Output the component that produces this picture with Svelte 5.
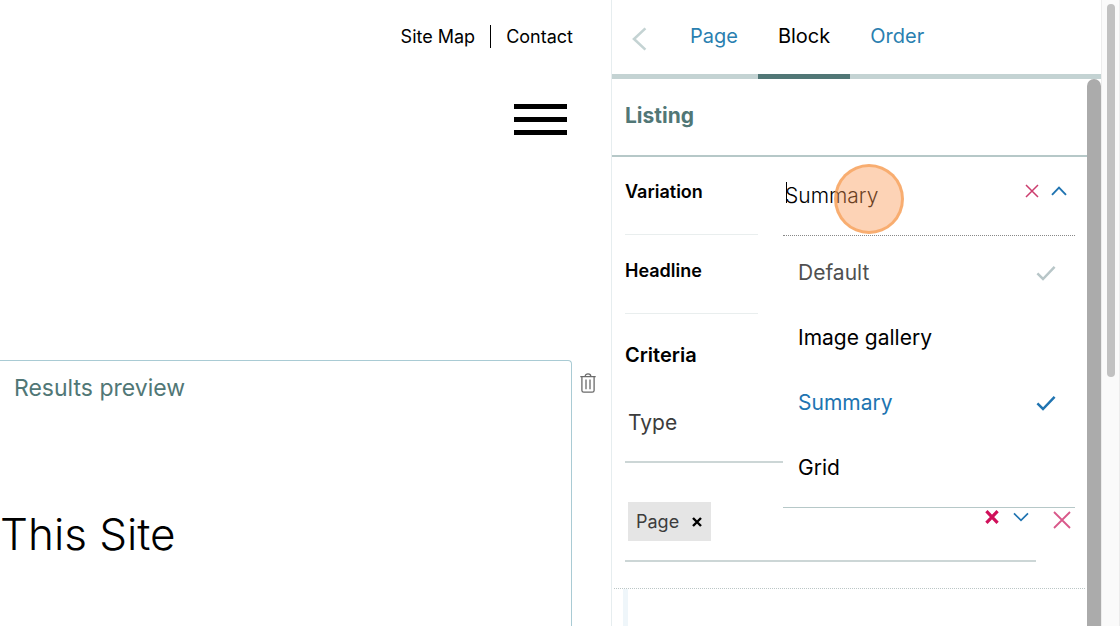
<script>
  const tabs = ['Page', 'Block', 'Order'];
  const variations = ['Default', 'Image gallery', 'Summary', 'Grid'];
  const fallback = 'Default';

  let activeTab = $state('Block');
  let variation = $state('Summary');
  let menuOpen = $state(true);
  let criteria = $state(['Page']);

  function choose(name) {
    variation = name;
    menuOpen = false;
  }
</script>

<div class="editor">
  <main class="page">
    <header class="page-header">
      <nav class="tools">
        <a href="#sitemap">Site Map</a>
        <a href="#contact">Contact</a>
      </nav>
      <button class="burger" aria-label="Open menu">
        <span></span>
        <span></span>
        <span></span>
      </button>
    </header>

    <div class="block-row">
      <section class="listing">
        <p class="preview-label">Results preview</p>
        <h2>This Site</h2>
      </section>
      <button class="delete" aria-label="Remove block">
        <svg width="16" height="20" viewBox="0 0 16 20" fill="none" stroke="#6b6b6b" stroke-width="1.3">
          <path d="M0.3 3.6H15.7M5.2 3.4C5.2 0 10.8 0 10.8 3.4M1.9 4V17.4Q1.9 19.2 3.7 19.2H12.3Q14.1 19.2 14.1 17.4V4M6 6.6V16.2M10 6.6V16.2" />
        </svg>
      </button>
    </div>
  </main>

  <aside class="sidebar">
    <div class="tabs">
      <button class="back" aria-label="Back">
        <svg width="15" height="24" viewBox="0 0 15 24" fill="none" stroke="#c4d3d3" stroke-width="2.6">
          <path d="M13.4 1.4 2 12 13.4 22.6" />
        </svg>
      </button>
      {#each tabs as tab}
        <button class="tab" class:active={tab === activeTab} onclick={() => (activeTab = tab)}>{tab}</button>
      {/each}
    </div>

    <div class="panel">
      <form class="settings">
        <h1>Listing</h1>

        <div class="field">
          <label for="variation">Variation</label>
          <div class="control combo">
            <input id="variation" type="text" role="combobox" aria-expanded={menuOpen} aria-controls="variation-menu" value={variation} />
            <span class="caret"></span>
            <button type="button" class="icon" aria-label="Clear variation" onclick={() => (variation = '')}>
              <svg width="14" height="14" viewBox="0 0 14 14" fill="none" stroke="#cc3d6e" stroke-width="1.5">
                <path d="M1 1 13 13M13 1 1 13" />
              </svg>
            </button>
            <button type="button" class="icon" aria-label="Toggle menu" onclick={() => (menuOpen = !menuOpen)}>
              <svg width="16" height="10" viewBox="0 0 16 10" fill="none" stroke="#2074b1" stroke-width="1.9">
                <path d="M1 8.8 8 1.6 15 8.8" />
              </svg>
            </button>
            {#if menuOpen}
              <div class="menu" id="variation-menu" role="listbox">
                {#each variations as name}
                  <button
                    type="button"
                    role="option"
                    class="option"
                    class:selected={name === variation}
                    class:fallback={name === fallback}
                    aria-selected={name === variation}
                    onclick={() => choose(name)}
                  >
                    {name}
                    {#if name === variation || name === fallback}
                      <svg width="20" height="16" viewBox="0 0 20 16" fill="none" stroke="currentColor" stroke-width="2.5">
                        <path d="M1.4 8.4 7 14 18.6 1.8" />
                      </svg>
                    {/if}
                  </button>
                {/each}
              </div>
            {/if}
            <span class="pointer"></span>
          </div>
        </div>

        <div class="field">
          <label for="headline">Headline</label>
          <div class="control">
            <input id="headline" type="text" />
          </div>
        </div>

        <fieldset class="criteria">
          <legend>Criteria</legend>
          <select aria-label="Criterion">
            <option>Type</option>
          </select>
          <div class="criterion">
            <div class="values">
              {#each criteria as value}
                <span class="chip">
                  {value}
                  <button type="button" aria-label="Remove {value}" onclick={() => (criteria = criteria.filter((v) => v !== value))}>
                    <svg width="10" height="10" viewBox="0 0 10 10" fill="none" stroke="#000" stroke-width="2.4">
                      <path d="M1 1 9 9M9 1 1 9" />
                    </svg>
                  </button>
                </span>
              {/each}
              <span class="actions">
                <button type="button" class="icon" aria-label="Clear values" onclick={() => (criteria = [])}>
                  <svg width="14" height="14" viewBox="0 0 14 14" fill="none" stroke="#d0105a" stroke-width="3.2">
                    <path d="M1.4 1.2 12.6 12.8M12.6 1.2 1.4 12.8" />
                  </svg>
                </button>
                <button type="button" class="icon" aria-label="Open values">
                  <svg width="16" height="10" viewBox="0 0 16 10" fill="none" stroke="#2074b1" stroke-width="1.7">
                    <path d="M1 1.4 8 8.4 15 1.4" />
                  </svg>
                </button>
              </span>
            </div>
            <button type="button" class="remove" aria-label="Remove criterion">
              <svg width="18" height="18" viewBox="0 0 18 18" fill="none" stroke="#d9588a" stroke-width="1.8">
                <path d="M1 1 17 17M17 1 1 17" />
              </svg>
            </button>
          </div>
        </fieldset>
        <div class="next"></div>
      </form>
      <div class="panel-scroll"></div>
    </div>
  </aside>

  <div class="window-scroll"><div class="thumb"></div></div>
</div>

<style>
  :global(body) {
    background: #fff;
  }
  .editor {
    display: flex;
    height: 100vh;
    overflow: hidden;
    font-family: Inter, 'Liberation Sans', sans-serif;
    color: #000;
  }
  .editor * {
    box-sizing: border-box;
  }
  button,
  input,
  select {
    margin: 0;
    padding: 0;
    border: 0;
    border-radius: 0;
    background: none;
    color: inherit;
    font: inherit;
    outline: none;
  }
  button {
    cursor: pointer;
  }
  svg {
    display: block;
  }

  .page {
    flex: 1;
    min-width: 0;
    display: flex;
    flex-direction: column;
  }
  .page-header {
    display: flex;
    flex-direction: column;
    align-items: flex-end;
    height: 360px;
    padding: 25px 44px 0 0;
  }
  .tools {
    display: flex;
    align-items: center;
    margin-right: -6px;
    font-size: 18px;
    line-height: 23px;
  }
  .tools a {
    color: #000;
    text-decoration: none;
  }
  .tools a + a {
    margin-left: 15px;
    padding-left: 15px;
    border-left: 1px solid #000;
  }
  .burger {
    display: flex;
    flex-direction: column;
    gap: 8px;
    width: 53px;
    margin-top: 56px;
  }
  .burger span {
    height: 5px;
    background: #000;
  }
  .block-row {
    flex: 1;
    display: flex;
    align-items: flex-start;
    gap: 8px;
    padding-right: 15px;
  }
  .listing {
    flex: 1;
    align-self: stretch;
    border: solid #a9cbd4;
    border-width: 1px 1px 0 0;
    border-top-right-radius: 4px;
  }
  .preview-label {
    margin: 11px 14px 0;
    font-size: 23px;
    line-height: 32px;
    color: #517776;
  }
  .listing h2 {
    margin: 102px 0 0;
    font-size: 44px;
    font-weight: 300;
    line-height: 56px;
  }
  .delete {
    margin-top: 13px;
  }

  .sidebar {
    display: flex;
    flex-direction: column;
    flex: 0 0 490px;
    border-left: 1px solid #e6edef;
  }
  .tabs {
    display: flex;
    height: 79px;
    border-bottom: 5px solid #c4d3d3;
  }
  .back {
    width: 54px;
    margin-right: 4px;
    padding: 4px 0 0 20px;
  }
  .tab {
    height: 79px;
    padding: 0 20px 2px;
    border-bottom: 5px solid transparent;
    font-size: 20px;
    color: #2a7fb0;
  }
  .tab.active {
    border-bottom-color: #517776;
    color: #000;
  }
  .panel {
    flex: 1;
    display: flex;
    min-height: 0;
  }
  .settings {
    flex: 1;
    min-width: 0;
  }
  .panel-scroll {
    width: 14px;
    border-radius: 7px 7px 0 0;
    background: #ababab;
  }
  h1 {
    margin: 0;
    padding: 22px 13px 24px;
    border-bottom: 2px solid #b6c8c8;
    font-size: 21px;
    font-weight: 700;
    line-height: 30px;
    color: #517776;
  }
  .field {
    display: flex;
    gap: 25px;
    padding: 0 12px 0 13px;
  }
  .field label {
    width: 133px;
    height: 78px;
    padding-top: 23px;
    border-bottom: 1px solid #e9eeee;
    font-size: 18px;
    font-weight: 600;
    line-height: 24px;
  }
  .control {
    flex: 1;
    min-width: 0;
  }
  .control input {
    flex: 1;
    min-width: 0;
    width: 100%;
    height: 76px;
    padding-left: 2px;
    font-size: 21px;
    font-weight: 300;
  }
  .combo {
    position: relative;
    display: flex;
    height: 79px;
    padding-right: 8px;
    gap: 12px;
    border-bottom: 1px dotted #888;
  }
  .combo .icon {
    height: 68px;
  }
  .caret {
    position: absolute;
    top: 25px;
    left: 3px;
    width: 1px;
    height: 21px;
    background: #000;
  }
  .pointer {
    position: absolute;
    z-index: 3;
    top: 7px;
    left: 51px;
    width: 70px;
    height: 70px;
    border: 3px solid rgba(245, 148, 66, 0.6);
    border-radius: 50%;
    background: rgba(250, 150, 80, 0.42);
    pointer-events: none;
  }
  .menu {
    position: absolute;
    z-index: 2;
    top: 79px;
    left: 0;
    right: 0;
    padding: 4px 0 7px;
    border-bottom: 1px solid #b6c8c8;
    background: #fff;
  }
  .option {
    display: flex;
    align-items: center;
    justify-content: space-between;
    width: 100%;
    height: 65px;
    padding: 0 19px 0 15px;
    font-size: 21px;
  }
  .option.fallback {
    color: #505050;
  }
  .option.fallback svg {
    color: #b8c6c8;
  }
  .option.selected {
    color: #2074b1;
  }
  .criteria {
    min-width: 0;
    margin: 0 2px;
    padding: 27px 14px 26px 11px;
    border: 0;
    border-bottom: 1px dotted #bbc6c6;
  }
  legend {
    float: left;
    width: 100%;
    padding: 0;
    font-size: 20px;
    font-weight: 600;
    line-height: 28px;
  }
  select {
    clear: both;
    display: block;
    width: calc(100% - 35px);
    height: 94px;
    padding: 14px 3px 0;
    border-bottom: 2px solid #ccd6d6;
    appearance: none;
    font-size: 21px;
    color: #3c3c3c;
  }
  .criterion {
    display: flex;
    gap: 17px;
    align-items: flex-start;
  }
  .values {
    flex: 1;
    display: flex;
    align-items: flex-start;
    height: 99px;
    padding: 39px 7px 0 3px;
    border-bottom: 2px solid #ccd6d6;
  }
  .chip {
    display: flex;
    align-items: center;
    gap: 13px;
    height: 39px;
    padding: 0 9px 0 8px;
    background: #e5e5e5;
    font-size: 18px;
    color: #3c3c3c;
  }
  .actions {
    display: flex;
    align-items: center;
    gap: 14px;
    height: 30px;
    margin-left: auto;
  }
  .remove {
    margin-top: 48px;
  }
  .next {
    height: 60px;
    margin-left: 11px;
    border-left: 5px solid #eff6fa;
  }

  .window-scroll {
    flex: 0 0 19px;
    padding: 4px 4px 0 5px;
    border: solid #ececec;
    border-width: 0 1px;
    background: #fafafa;
  }
  .thumb {
    height: 60%;
    border-radius: 5px;
    background: #c1c1c1;
  }
</style>
